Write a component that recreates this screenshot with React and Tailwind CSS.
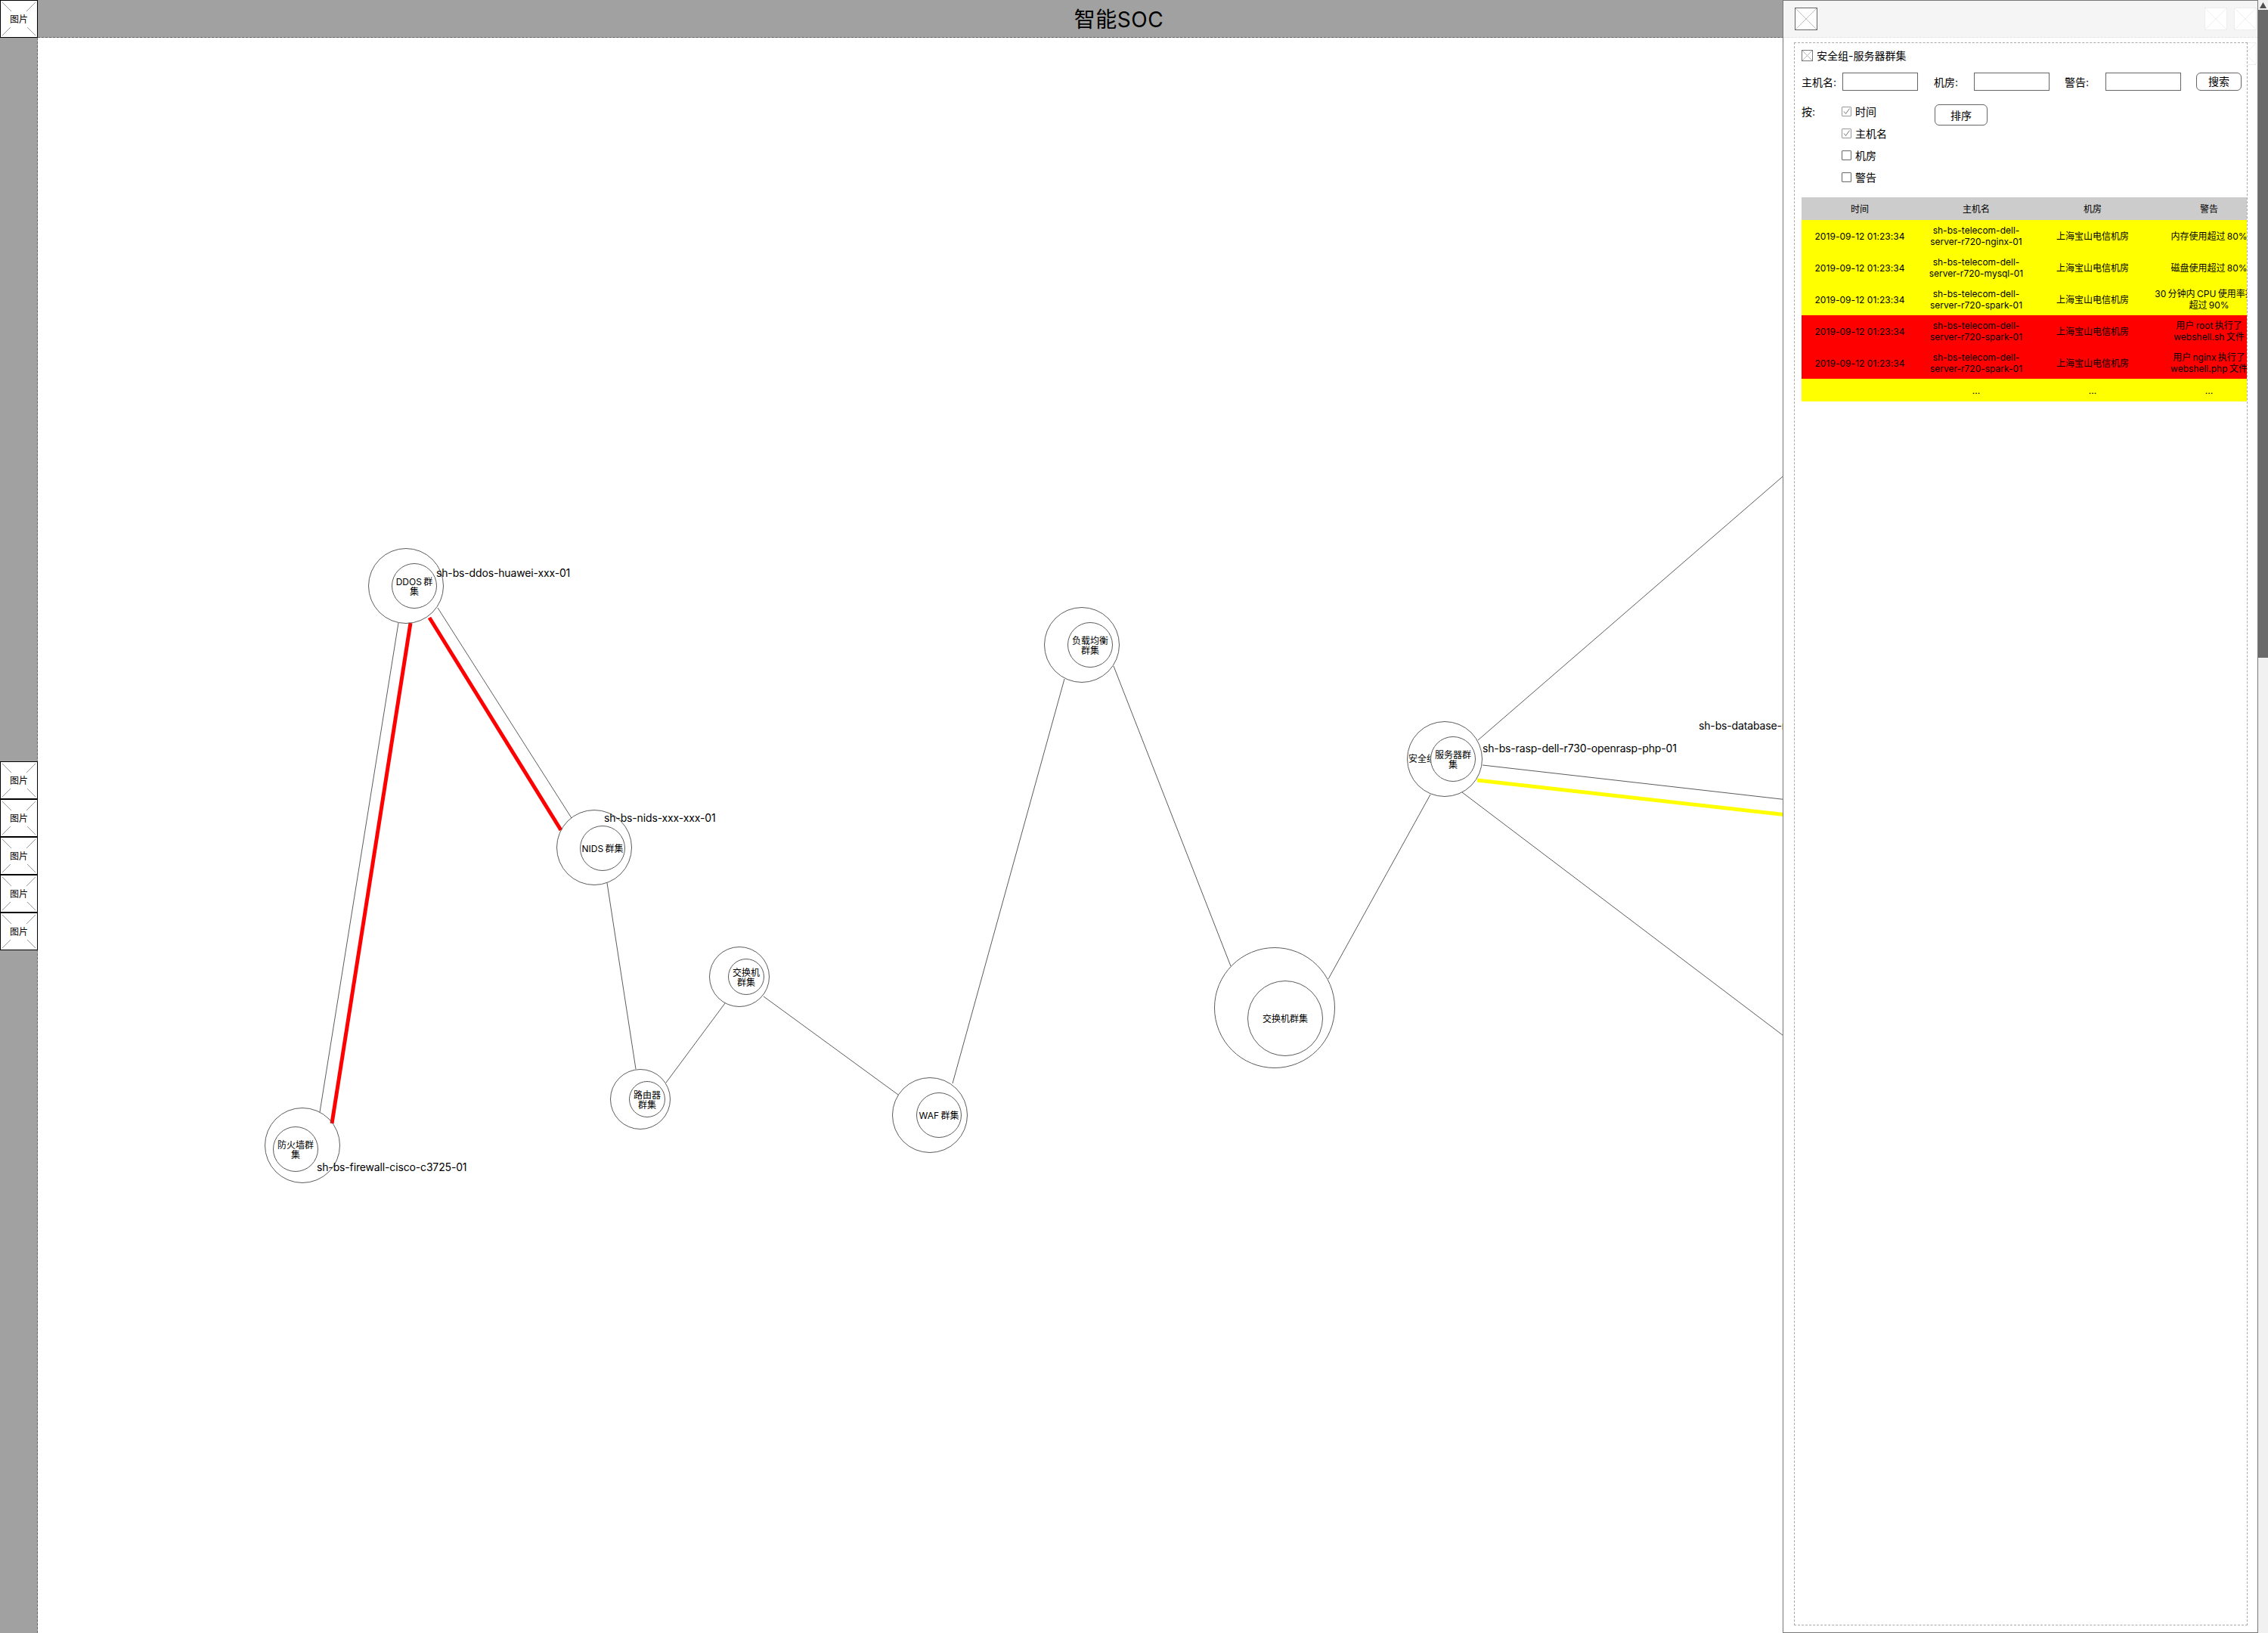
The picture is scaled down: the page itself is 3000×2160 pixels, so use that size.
const lines = [
  [527, 824, 423, 1471, "#5c5c5c", 1],
  [543, 824, 439, 1486, "#ff0000", 5],
  [579, 804, 756, 1082, "#5c5c5c", 1],
  [568, 817, 742, 1098, "#ff0000", 5],
  [803, 1168, 841, 1414, "#5c5c5c", 1],
  [881, 1432, 959, 1327, "#5c5c5c", 1],
  [1010, 1318, 1188, 1448, "#5c5c5c", 1],
  [1260, 1433, 1408, 898, "#5c5c5c", 1],
  [1473, 881, 1628, 1278, "#5c5c5c", 1],
  [1757, 1295, 1892, 1051, "#5c5c5c", 1],
  [1955, 979, 2400, 594, "#5c5c5c", 1],
  [1961, 1012, 2400, 1062, "#5c5c5c", 1],
  [1954, 1032, 2400, 1082, "#ffff00", 5],
  [1934, 1048, 2400, 1401, "#5c5c5c", 1],
];

const nodes = [
  { name: "DDOS 群集", outer: "left-[437px] top-[675px] w-[100px] h-[100px]", inner: "left-[30px] top-[19px] w-[60px] h-[60px]" },
  { name: "防火墙群集", outer: "left-[300px] top-[1415px] w-[100px] h-[100px]", inner: "left-[10px] top-[24px] w-[60px] h-[60px]" },
  { name: "NIDS 群集", outer: "left-[686px] top-[1021px] w-[100px] h-[100px]", inner: "left-[30px] top-[20px] w-[60px] h-[60px]" },
  { name: "路由器群集", outer: "left-[757px] top-[1364px] w-[80px] h-[80px]", inner: "left-[24px] top-[15px] w-[48px] h-[48px]" },
  { name: "交换机群集", outer: "left-[888px] top-[1202px] w-[80px] h-[80px]", inner: "left-[24px] top-[15px] w-[48px] h-[48px]" },
  { name: "WAF 群集", outer: "left-[1130px] top-[1375px] w-[100px] h-[100px]", inner: "left-[31px] top-[19px] w-[60px] h-[60px]" },
  { name: "负载均衡群集", outer: "left-[1331px] top-[753px] w-[100px] h-[100px]", inner: "left-[30px] top-[19px] w-[60px] h-[60px]" },
  { name: "交换机群集", outer: "left-[1556px] top-[1203px] w-[160px] h-[160px]", inner: "left-[43px] top-[43px] w-[100px] h-[100px]" },
  { name: "服务器群集", outer: "left-[1811px] top-[904px] w-[100px] h-[100px]", inner: "left-[30px] top-[19px] w-[60px] h-[60px]", behind: "安全组" },
];

const labels = [
  { text: "sh-bs-ddos-huawei-xxx-01", pos: "left-[527px] top-[699px]" },
  { text: "sh-bs-firewall-cisco-c3725-01", pos: "left-[369px] top-[1485px]" },
  { text: "sh-bs-nids-xxx-xxx-01", pos: "left-[749px] top-[1023px]" },
  { text: "sh-bs-rasp-dell-r730-openrasp-php-01", pos: "left-[1911px] top-[931px]" },
  { text: "sh-bs-database-mysql-01", pos: "left-[2197px] top-[901px]" },
];

const rows = [
  ["2019-09-12 01:23:34", "sh-bs-telecom-dell-server-r720-nginx-01", "上海宝山电信机房", "内存使用超过 80%", "bg-[#ffff00]"],
  ["2019-09-12 01:23:34", "sh-bs-telecom-dell-server-r720-mysql-01", "上海宝山电信机房", "磁盘使用超过 80%", "bg-[#ffff00]"],
  ["2019-09-12 01:23:34", "sh-bs-telecom-dell-server-r720-spark-01", "上海宝山电信机房", "30 分钟内 CPU 使用率持续超过 90%", "bg-[#ffff00]"],
  ["2019-09-12 01:23:34", "sh-bs-telecom-dell-server-r720-spark-01", "上海宝山电信机房", "用户 root 执行了 webshell.sh 文件", "bg-[#ff0000]"],
  ["2019-09-12 01:23:34", "sh-bs-telecom-dell-server-r720-spark-01", "上海宝山电信机房", "用户 nginx 执行了 webshell.php 文件", "bg-[#ff0000]"],
];

function ImageButton() {
  return (
    <div className="relative w-[50px] h-[50px] shrink-0 border border-black bg-white flex items-center justify-center pt-px text-[12px] text-black">
      <svg className="absolute -left-px -top-px" width="50" height="50" fill="none" stroke="#999" strokeWidth="1">
        <path d="M3 3L15 15M47 3L35 15M3 47L14 36M47 47L36 36" />
      </svg>
      <span className="relative">图片</span>
    </div>
  );
}

function Cross({ box, stroke, size = 30 }) {
  return (
    <div className={box}>
      <svg className="block w-full h-full" viewBox={`0 0 ${size} ${size}`} fill="none" stroke={stroke} strokeWidth="1">
        <path d={`M0 0L${size} ${size}M${size} 0L0 ${size}`} />
      </svg>
    </div>
  );
}

function Check({ checked, label }) {
  return (
    <div className="h-[29px] flex items-center">
      <span className={`w-[13px] h-[13px] border rounded-[1px] bg-white flex items-center justify-center ${checked ? "border-[#999]" : "border-[#666]"}`}>
        {checked && (
          <svg width="11" height="11" viewBox="0 0 11 11" fill="none" stroke="#777" strokeWidth="1">
            <path d="M2 5.5L4.5 8.5L9.5 1.5" />
          </svg>
        )}
      </span>
      <span className="ml-[5px]">{label}</span>
    </div>
  );
}

export default function App() {
  return (
    <div className="relative w-[3000px] h-[2160px] overflow-hidden bg-white text-black font-[Inter,'Noto_Sans_CJK_SC',sans-serif]">
      <header className="h-[50px] flex bg-[#a1a1a1]">
        <ImageButton />
        <div className="flex-1 flex items-center justify-center pr-[90px] pt-[2px] text-[28px] tracking-[0.5px] leading-[48px] border-b border-dashed border-[#666]">
          智能SOC
        </div>
      </header>
      <div className="flex h-[2110px]">
        <aside className="w-[50px] shrink-0 bg-[#a1a1a1] border-r border-dashed border-[#666] pt-[957px] flex flex-col">
          <ImageButton />
          <ImageButton />
          <ImageButton />
          <ImageButton />
          <ImageButton />
        </aside>
        <main className="relative flex-1 bg-white">
          <svg className="absolute left-0 top-0" width="2950" height="2110" viewBox="50 50 2950 2110" fill="none">
            {lines.map(([x1, y1, x2, y2, c, w], i) => (
              <line key={i} x1={x1} y1={y1} x2={x2} y2={y2} stroke={c} strokeWidth={w} />
            ))}
          </svg>
          {nodes.map((n, i) => (
            <div key={i} className={`absolute rounded-full border border-[#5c5c5c] ${n.outer}`}>
              {n.behind && (
                <span className="absolute left-px top-[42px] text-[12px] leading-[13px] whitespace-nowrap">{n.behind}</span>
              )}
              <div className={`absolute rounded-full border border-[#5c5c5c] bg-white flex items-center justify-center pt-px text-center text-[12px] leading-[13px] [word-spacing:-1px] ${n.inner}`}>
                {n.name}
              </div>
            </div>
          ))}
          {labels.map((l) => (
            <span key={l.text} className={`absolute text-[14px] leading-[17px] tracking-[-0.15px] whitespace-nowrap ${l.pos}`}>
              {l.text}
            </span>
          ))}
        </main>
      </div>

      <div className="absolute right-0 top-0 h-[2160px] flex">
        <section className="relative w-[629px] h-full bg-white border border-[#777]">
          <div className="h-[49px] bg-[#f5f5f5] border-b border-dashed border-[#e4e4e4] flex items-center pl-[15px] pr-px">
            <Cross box="w-[30px] h-[30px] border border-[#666] bg-white" stroke="#bbb" />
            <Cross box="w-[30px] h-[30px] ml-auto border border-[#eee] bg-white" stroke="#eee" />
            <Cross box="w-[30px] h-[30px] ml-[9px] border border-[#eee] bg-white" stroke="#eee" />
          </div>
          <Cross box="absolute left-[596px] top-[55px] w-[30px] h-[30px] border border-[#eee] bg-white" stroke="#eee" />
          <div className="relative ml-[14px] mt-[6px] w-[600px] h-[2094px] bg-white border border-dashed border-[#aaa] pl-[9px] pt-[9px] text-[14px] overflow-hidden">
            <div className="h-[15px] flex items-center leading-[15px]">
              <Cross box="w-[15px] h-[15px] border border-[#777] bg-white" stroke="#aaa" size={15} />
              <span className="ml-[5px]">安全组-服务器群集</span>
            </div>
            <div className="mt-[15px] h-[24px] flex items-center">
              <label className="w-[54px]">主机名:</label>
              <input className="w-[100px] h-[24px] border border-[#666] bg-white" />
              <label className="ml-[21px] w-[53px]">机房:</label>
              <input className="w-[100px] h-[24px] border border-[#666] bg-white" />
              <label className="ml-[20px] w-[54px]">警告:</label>
              <input className="w-[100px] h-[24px] border border-[#666] bg-white" />
              <button className="ml-[20px] w-[60px] h-[24px] rounded-[6px] border border-[#666] bg-white text-[14px] leading-[22px]">搜索</button>
            </div>
            <div className="mt-[13px] flex items-start">
              <div className="w-[53px] h-[29px] flex items-center">按:</div>
              <div className="w-[123px] flex flex-col">
                <Check checked label="时间" />
                <Check checked label="主机名" />
                <Check label="机房" />
                <Check label="警告" />
              </div>
              <button className="mt-[5px] w-[70px] h-[28px] rounded-[6px] border border-[#666] bg-white text-[14px]">排序</button>
            </div>
            <table className="mt-[12px] w-[616px] max-w-none table-fixed border-collapse text-[12px] leading-[15px] text-center">
              <thead>
                <tr className="h-[30px] bg-[#cccccc]">
                  <th className="w-[154px] font-normal">时间</th>
                  <th className="w-[154px] font-normal">主机名</th>
                  <th className="w-[154px] font-normal">机房</th>
                  <th className="w-[154px] font-normal">警告</th>
                </tr>
              </thead>
              <tbody>
                {rows.map((r, i) => (
                  <tr key={i} className={`h-[42px] ${r[4]}`}>
                    <td className="px-[5px] tracking-[0.05px]">{r[0]}</td>
                    <td className="px-[5px]">{r[1]}</td>
                    <td className="px-[5px]">{r[2]}</td>
                    <td className="px-[4px] [word-spacing:-1px]">{r[3]}</td>
                  </tr>
                ))}
                <tr className="h-[30px] bg-[#ffff00]">
                  <td></td>
                  <td>...</td>
                  <td>...</td>
                  <td>...</td>
                </tr>
              </tbody>
            </table>
          </div>
        </section>
        <div className="w-[13px] h-full flex flex-col bg-[#f1f1f1]">
          <div className="h-[13px] bg-[#f1f1f1] flex items-center justify-center">
            <svg width="9" height="8" viewBox="0 0 9 8"><path d="M4.5 0L9 8H0Z" fill="#505050" /></svg>
          </div>
          <div className="h-[857px] bg-[#6a6a6a]" />
        </div>
      </div>
    </div>
  );
}
